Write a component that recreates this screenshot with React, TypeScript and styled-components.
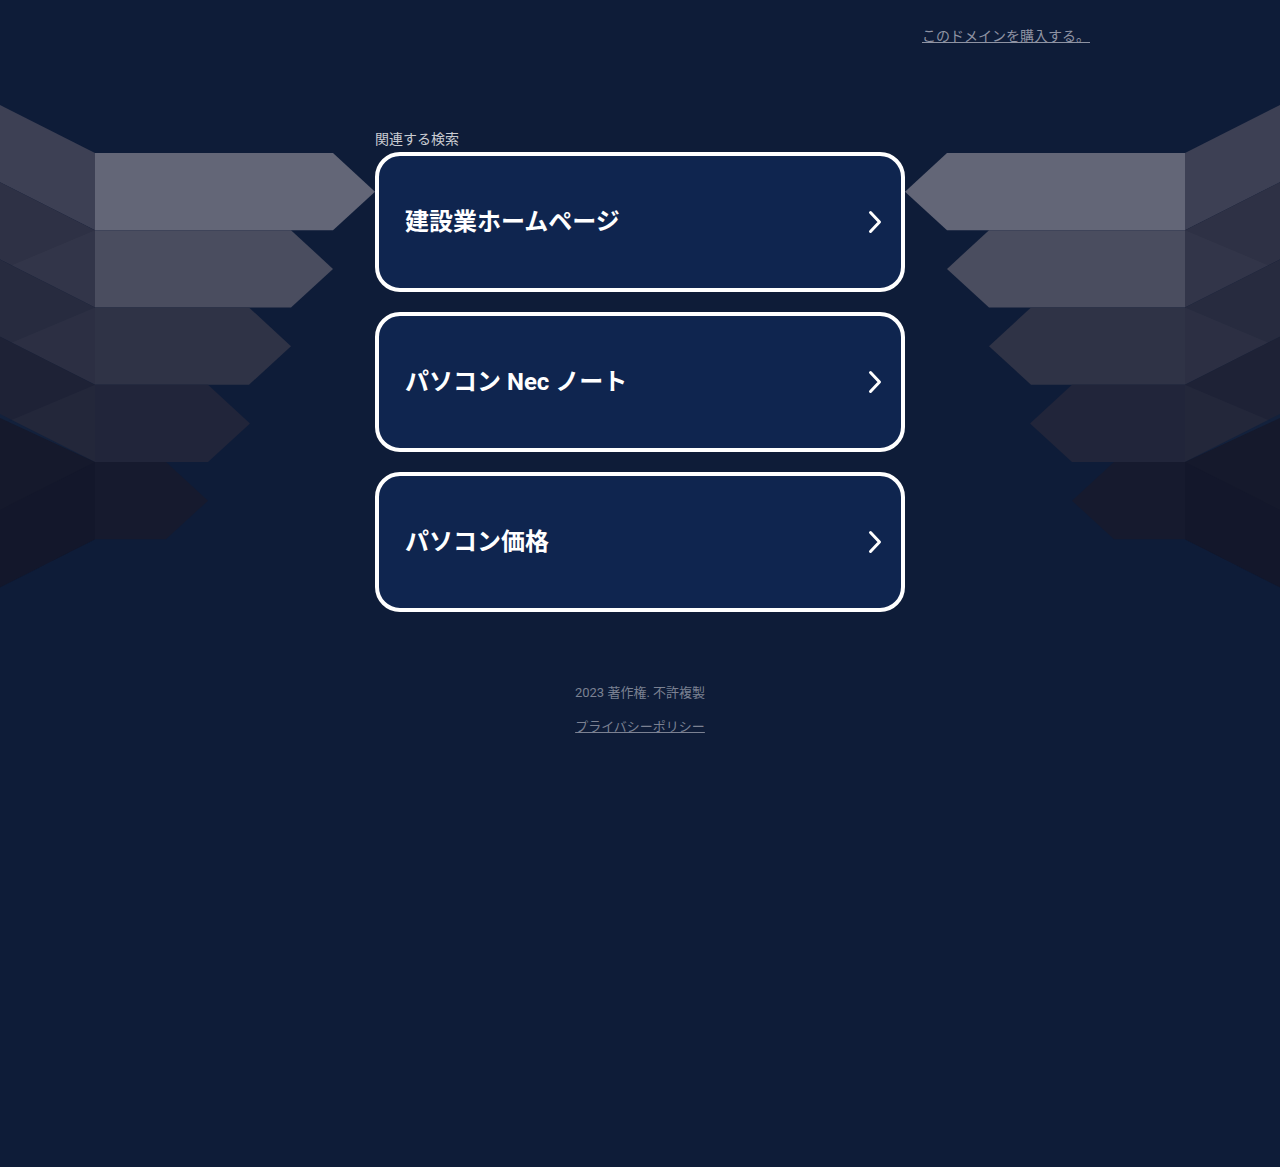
import React from "react";
import styled, { createGlobalStyle } from "styled-components";

const GlobalStyle = createGlobalStyle`
  html, body { margin: 0; padding: 0; }
  body {
    background: #0e1c38;
    font-family: Roboto, "Noto Sans CJK JP", "Noto Sans", sans-serif;
    min-height: 1167px;
  }
`;

const Page = styled.div`
  position: relative;
  min-height: 1167px;
  overflow: hidden;
`;

const Wing = styled.svg<{ $side: "left" | "right" }>`
  position: absolute;
  top: 0;
  ${(p) => (p.$side === "left" ? "left: 0;" : "right: 0; transform: scaleX(-1);")}
  width: 380px;
  height: 600px;
  z-index: 0;
  pointer-events: none;
`;

const Header = styled.header`
  position: relative;
  z-index: 1;
  width: 900px;
  margin: 0 auto;
  padding-top: 28px;
  display: flex;
  justify-content: flex-end;
`;

const TopLink = styled.a`
  font-size: 14px;
  line-height: 16px;
  color: #8e93a3;
  text-decoration: underline;
`;

const Main = styled.main`
  position: relative;
  z-index: 1;
  width: 530px;
  margin: 0 auto;
  padding-top: 86px;
  display: flex;
  flex-direction: column;
`;

const Label = styled.div`
  font-size: 14px;
  line-height: 18px;
  color: #c9cbd1;
  margin-bottom: 4px;
`;

const List = styled.div`
  display: flex;
  flex-direction: column;
  gap: 20px;
`;

const Card = styled.a`
  box-sizing: border-box;
  height: 140px;
  border: 4px solid #ffffff;
  border-radius: 25px;
  background: #0f254f;
  display: flex;
  align-items: center;
  justify-content: space-between;
  padding: 0 19px 0 26px;
  text-decoration: none;
  color: #ffffff;
`;

const CardText = styled.span`
  font-size: 24px;
  font-weight: 700;
  line-height: 30px;
  color: #ffffff;
`;

const Chevron = styled.svg`
  width: 14px;
  height: 24px;
  flex: none;
`;

const Footer = styled.footer`
  position: relative;
  z-index: 1;
  margin-top: 73px;
  display: flex;
  flex-direction: column;
  align-items: center;
  gap: 18px;
`;

const FooterText = styled.div`
  font-size: 13px;
  line-height: 16px;
  color: #7b8192;
`;

const FooterLink = styled.a`
  font-size: 13px;
  line-height: 16px;
  color: #7b8192;
  text-decoration: underline;
`;

const rows = [
  { rect: "#636677", strip: "#3d4054", R: 333 },
  { rect: "#4a4d5f", strip: "#2e3145", R: 291 },
  { rect: "#2f3346", strip: "#272b3f", R: 249 },
  { rect: "#21253a", strip: "#1e2236", R: 208 },
  { rect: "#161a2e", strip: "#15192c", R: 166 },
];

const WingArt: React.FC<{ side: "left" | "right" }> = ({ side }) => (
  <Wing $side={side} viewBox="0 0 380 600" aria-hidden="true">
    {rows.map((r, i) => {
      const yT = 153 + 77.25 * i;
      const yB = yT + 77.25;
      const mid = (yT + yB) / 2;
      const strip =
        i < 4
          ? `0,${yT - 48} 95,${yT} 95,${yB} 0,${yB - 48}`
          : `0,${yT - 44} 95,${yT} 95,${yB} 0,${yB + 48}`;
      return (
        <g key={i}>
          <polygon points={strip} fill={r.strip} />
          {i > 0 && i < 4 && (
            <polygon
              points={`0,${yT + 40} 95,${yT} 95,${yB} 0,${yB + 40}`}
              fill="#ffffff"
              opacity={0.025}
            />
          )}
          {i === 4 && (
            <polygon
              points={`0,${yT + 48} 95,${yT} 95,${yB} 0,${yB + 48}`}
              fill="#12162a"
              opacity={0.5}
            />
          )}
          <polygon
            points={`95,${yT} ${r.R},${yT} ${r.R + 42},${mid} ${r.R},${yB} 95,${yB}`}
            fill={r.rect}
          />
        </g>
      );
    })}
  </Wing>
);

const ChevronIcon = () => (
  <Chevron viewBox="0 0 14 24" aria-hidden="true">
    <path
      d="M2.5 2.5 L11.5 12 L2.5 21.5"
      fill="none"
      stroke="#ffffff"
      strokeWidth="3"
      strokeLinecap="round"
      strokeLinejoin="round"
    />
  </Chevron>
);

const items = ["建設業ホームページ", "パソコン Nec ノート", "パソコン価格"];

export default function App() {
  return (
    <Page>
      <GlobalStyle />
      <WingArt side="left" />
      <WingArt side="right" />
      <Header>
        <TopLink href="#">このドメインを購入する。</TopLink>
      </Header>
      <Main>
        <Label>関連する検索</Label>
        <List>
          {items.map((t) => (
            <Card key={t} href="#">
              <CardText>{t}</CardText>
              <ChevronIcon />
            </Card>
          ))}
        </List>
      </Main>
      <Footer>
        <FooterText>2023 著作権. 不許複製</FooterText>
        <FooterLink href="#">プライバシーポリシー</FooterLink>
      </Footer>
    </Page>
  );
}
